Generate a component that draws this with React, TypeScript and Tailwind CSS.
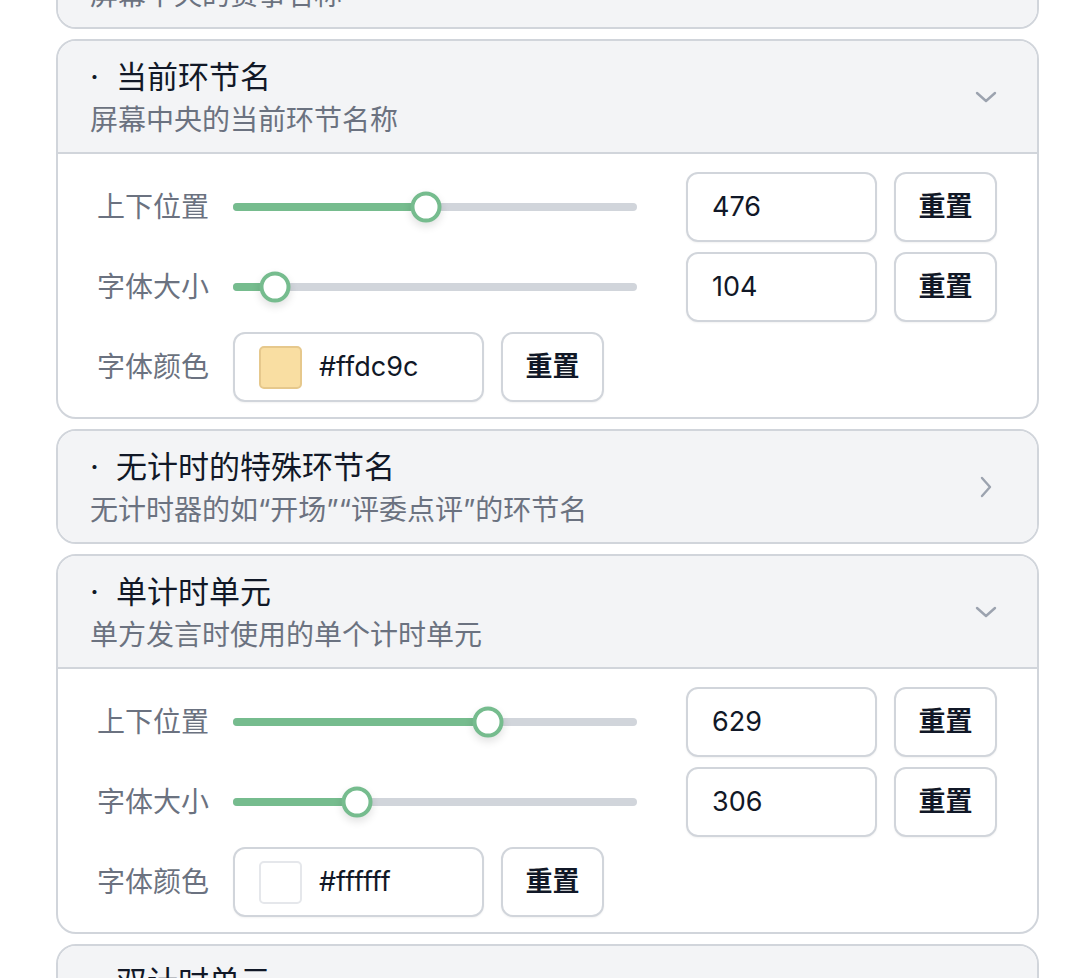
import React from 'react';

const FONT = '"Inter", "Noto Sans CJK SC", sans-serif';

type SliderRow = { label: string; value: number; thumb: number };

type Section = {
  title: string;
  desc: string;
  open: boolean;
  rows?: SliderRow[];
  color?: { hex: string; swatch: string; edge: string };
};

const sections: Section[] = [
  { title: '赛事名称', desc: '屏幕中央的赛事名称', open: false },
  {
    title: '当前环节名',
    desc: '屏幕中央的当前环节名称',
    open: true,
    rows: [
      { label: '上下位置', value: 476, thumb: 193 },
      { label: '字体大小', value: 104, thumb: 42 },
    ],
    color: { hex: '#ffdc9c', swatch: '#f9dea2', edge: '#e6c88c' },
  },
  { title: '无计时的特殊环节名', desc: '无计时器的如“开场”“评委点评”的环节名', open: false },
  {
    title: '单计时单元',
    desc: '单方发言时使用的单个计时单元',
    open: true,
    rows: [
      { label: '上下位置', value: 629, thumb: 255 },
      { label: '字体大小', value: 306, thumb: 124 },
    ],
    color: { hex: '#ffffff', swatch: '#ffffff', edge: '#e5e7eb' },
  },
  { title: '双计时单元', desc: '双方对辩时使用的计时单元', open: false },
];

const ChevronDown = () => (
  <svg width="22" height="14" viewBox="0 0 22 14" fill="none">
    <path d="M2 3l9 8 9-8" stroke="#9ca3af" strokeWidth="2.4" strokeLinecap="round" strokeLinejoin="round" />
  </svg>
);

const ChevronRight = () => (
  <svg width="14" height="22" viewBox="0 0 14 22" fill="none">
    <path d="M3 2l8 9-8 9" stroke="#9ca3af" strokeWidth="2.4" strokeLinecap="round" strokeLinejoin="round" />
  </svg>
);

const ResetButton = ({ className = '' }: { className?: string }) => (
  <button
    className={`w-[103px] h-[70px] shrink-0 rounded-[12px] border-2 border-[#d1d5db] bg-white text-[27px] font-bold text-[#111827] shadow-[0_1px_2px_rgba(0,0,0,0.05)] ${className}`}
  >
    重置
  </button>
);

const Row = ({ row }: { row: SliderRow }) => (
  <div className="flex items-center h-[70px]">
    <span className="w-[136px] shrink-0 text-[28px] text-[#6b7280]">{row.label}</span>
    <div className="relative w-[404px] h-[8px] shrink-0 rounded-full bg-[#d1d5db]">
      <div className="h-full rounded-full bg-[#76bc8e]" style={{ width: row.thumb }} />
      <div
        className="absolute top-1/2 w-[31px] h-[31px] -translate-x-1/2 -translate-y-1/2 rounded-full border-[4px] border-[#76bc8e] bg-white shadow-[0_4px_8px_rgba(0,0,0,0.12)]"
        style={{ left: row.thumb }}
      />
    </div>
    <div className="ml-[49px] w-[191px] h-[70px] shrink-0 flex items-center pl-[24px] rounded-[12px] border-2 border-[#d1d5db] bg-white text-[27px] text-[#111827] shadow-[0_1px_2px_rgba(0,0,0,0.05)]">
      {row.value}
    </div>
    <ResetButton className="ml-[17px]" />
  </div>
);

export default function App() {
  return (
    <div className="min-h-screen bg-white overflow-hidden" style={{ fontFamily: FONT }}>
      <div className="ml-[56px] w-[983px] -mt-[86px] flex flex-col gap-[10px]">
        {sections.map((s) => (
          <div key={s.title} className="rounded-[20px] border-2 border-[#d1d5db] overflow-hidden bg-white">
            <div
              className={`flex items-center justify-between bg-[#f3f4f6] pl-[32px] pr-[40px] pt-[16px] pb-[15px] ${
                s.open ? 'border-b-2 border-[#d1d5db]' : ''
              }`}
            >
              <div>
                <div className="text-[31px] leading-[40px] text-[#111827]">
                  <span className="inline-block w-[26px]">·</span>
                  {s.title}
                </div>
                <div className="mt-[6px] text-[28px] leading-[34px] text-[#6b7280]">{s.desc}</div>
              </div>
              <div className="w-[22px] flex justify-center">{s.open ? <ChevronDown /> : <ChevronRight />}</div>
            </div>
            {s.open && s.rows && s.color && (
              <div className="flex flex-col gap-[10px] pl-[39px] pr-[40px] pt-[18px] pb-[15px]">
                {s.rows.map((r) => (
                  <Row key={r.label} row={r} />
                ))}
                <div className="flex items-center h-[70px]">
                  <span className="w-[136px] shrink-0 text-[28px] text-[#6b7280]">字体颜色</span>
                  <div className="w-[251px] h-[70px] shrink-0 flex items-center gap-[17px] pl-[24px] rounded-[12px] border-2 border-[#d1d5db] bg-white shadow-[0_1px_2px_rgba(0,0,0,0.05)]">
                    <span
                      className="w-[43px] h-[43px] rounded-[5px] border-2"
                      style={{ backgroundColor: s.color.swatch, borderColor: s.color.edge }}
                    />
                    <span className="text-[27px] text-[#111827]">{s.color.hex}</span>
                  </div>
                  <ResetButton className="ml-[17px]" />
                </div>
              </div>
            )}
          </div>
        ))}
      </div>
    </div>
  );
}
